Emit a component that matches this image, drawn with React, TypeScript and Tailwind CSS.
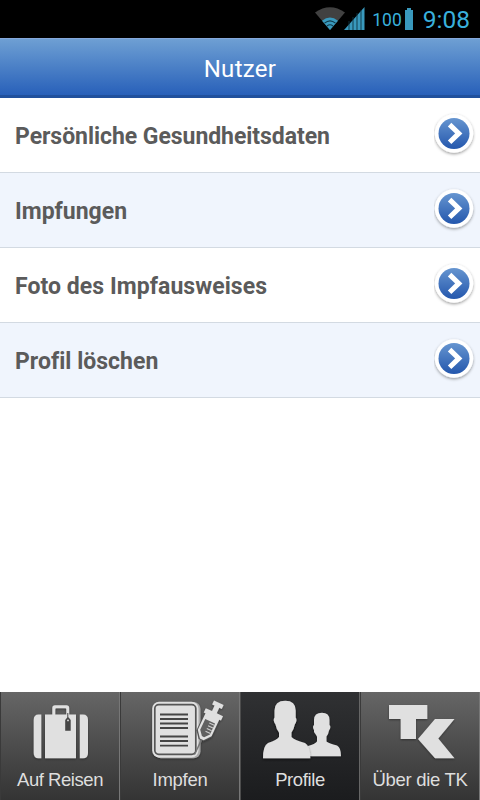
import type { ReactNode } from "react";

const rows = [
  { label: "Persönliche Gesundheitsdaten", tracking: "tracking-[-0.05px]" },
  { label: "Impfungen", tracking: "tracking-[0px]" },
  { label: "Foto des Impfausweises", tracking: "tracking-[0.06px]" },
  { label: "Profil löschen", tracking: "tracking-[0.02px]" },
];

function StatusBar() {
  return (
    <div className="flex h-[38px] items-center justify-end bg-black pr-[10px] text-[#39b0dc]">
      <svg width="50" height="24" viewBox="0 0 50 24">
        <path d="M0 5.5 Q15 -5 30 5.5 L15 23Z" fill="#414141" />
        <path d="M7 13.8 Q15 7 23 13.8 L15 23Z" fill="#3999bd" />
        <path d="M9.5 16.2 Q15 11.5 20.5 16.2 M12 19 Q15 16.5 18 19" stroke="#10394a" strokeWidth="1.1" fill="none" />
        <path d="M29 23 L49.5 0 V23Z" fill="#3999bd" />
        <path d="M34 14V23 M38 10V23 M42 6V23 M46 3V23" stroke="#0d3341" strokeWidth="0.9" />
      </svg>
      <span className="ml-[7px] mt-px font-[Roboto] text-[17.5px] leading-6">100</span>
      <svg className="ml-[3px]" width="8" height="24" viewBox="0 0 8 24">
        <path d="M2 1h4v2h2v20H0V3h2z" fill="#3999bd" />
      </svg>
      <span className="mt-[2px] ml-[10px] font-[Roboto] text-[24.5px] leading-6">9:08</span>
    </div>
  );
}

function ArrowButton() {
  return (
    <svg width="46" height="50" viewBox="0 0 46 50">
      <defs>
        <linearGradient id="arrow-blue" x1="0" y1="0" x2="0" y2="1">
          <stop offset="0" stopColor="#6695d0" />
          <stop offset="1" stopColor="#2457ad" />
        </linearGradient>
        <filter id="arrow-shadow" x="-20%" y="-20%" width="140%" height="150%">
          <feDropShadow dx="0" dy="1.3" stdDeviation="1.4" floodColor="#000" floodOpacity="0.4" />
        </filter>
      </defs>
      <circle cx="20" cy="23.5" r="19.2" fill="#fff" filter="url(#arrow-shadow)" />
      <circle cx="20" cy="23.5" r="15.5" fill="url(#arrow-blue)" />
      <path d="M15.6 14.6 L24.8 23.4 L15.6 32.2" fill="none" stroke="#fff" strokeWidth="5" />
    </svg>
  );
}

function SuitcaseIcon() {
  return (
    <>
      <path d="M41.3 22.5V66.3H38.5Q33.7 66.3 33.7 61V28Q33.7 22.5 38.5 22.5Z" />
      <path d="M79.8 22.5V66.3H83Q88 66.3 88 61V28Q88 22.5 83 22.5Z" />
      <path d="M45 22.5H52.3V16Q52.3 13.2 55 13.2H66.5Q69.2 13.2 69.2 16V22.5H76V66.3H45Z M55.3 22.5H66.3V17.2Q66.3 16.2 65.3 16.2H56.3Q55.3 16.2 55.3 17.2Z" fillRule="evenodd" />
      <path d="M67.8 21V27" stroke="#444" strokeWidth="1" />
      <path d="M65.2 28L67.2 25.5H68.7L70.7 28V38.7H65.2Z" fill="#444" />
      <circle cx="68" cy="28.4" r="0.9" />
    </>
  );
}

function VaccinationIcon() {
  return (
    <>
      <rect x="34" y="10" width="46.5" height="56.3" rx="7" fill="#aaa" />
      <rect x="32.2" y="9.7" width="46.3" height="55.8" rx="7" />
      <rect x="34.8" y="12.6" width="41" height="49.7" rx="4" fill="none" stroke="#555" strokeWidth="1.7" />
      <path d="M40 22.5H68M40 27H68M40 31.5H68M40 36H68M40 44.5H68M40 49H68M40 53.6H68" stroke="#444" strokeWidth="1.8" />
      <g transform="translate(98.2 12) rotate(25)">
        <path d="M-1 38H1L.5 56H-.5Z" fill="#777" />
        <path d="M-8.6 13H8V33L2.5 40H-3L-8.6 33Z" fill="#555" />
        <path d="M-5.3 -1.5H5.3V3H2.6V9H9.5V13.8H7.6V32L2 39H-2L-7.6 32V13.8H-9.5V9H-2.6V3H-5.3Z" />
        <path d="M-5.4 19H5.4V31L1.2 36H-1.2L-5.4 31Z" fill="#606060" />
        <path d="M0 21H5.4M0 24H5.4M0 27H5.4M0 30H5.4" stroke="#ccc" strokeWidth="1.1" />
      </g>
    </>
  );
}

function ProfilesIcon() {
  return (
    <>
      <path d="M74 40Q75.5 42 77 44.5V49.5Q75 52 68 54V64.3H101Q101 55.5 97 53.5Q89 51.5 86.5 49.5V44.5Q88.5 42 89 38.5Q91.5 34.5 89.5 33V28Q89.5 20.8 82 20.8Q74 20.8 74 28V33Q72 34.5 74 38Z" />
      <path
        d="M23 66.3Q23 53.5 28 51Q37 48 39 45V40.5Q36.3 37 35.5 32.5Q32.5 28 34.5 25.5V18.5Q34.5 8.7 45.3 8.7Q55.7 8.7 55.7 18.5V25.5Q57.7 28 54.8 32.5Q54 37 51.5 40.5V45Q54 48 65 51Q70.3 54 70.3 66.3Z"
        filter="url(#tab-shadow)"
      />
    </>
  );
}

function TkLogo() {
  return (
    <>
      <path d="M29 13H67.3V27H56V47H40.7V27H29Z" />
      <path d="M75 27H94.5L78.3 46.5L94.5 66.3H75L58 47Z" />
    </>
  );
}

type TabProps = {
  label: string;
  active?: boolean;
  labelClass: string;
  children: ReactNode;
};

function Tab({ label, active = false, labelClass, children }: TabProps) {
  return (
    <div
      className={
        active
          ? "flex h-full flex-col items-center border-x border-l-[#4c4c4c] border-r-[#666] bg-linear-to-b from-[#303133] to-[#1b1c1e]"
          : "flex h-full flex-col items-center border-r border-l border-l-[#3a3a3a] border-r-[#777] bg-linear-to-b from-[#666] to-[#343434]"
      }
    >
      <svg className="h-[76px] w-[120px] shrink-0" viewBox="0 0 120 76" fill="#e0e0e0">
        <defs>
          <filter id="tab-shadow" x="-10%" y="-10%" width="120%" height="125%">
            <feDropShadow dx="0" dy="1" stdDeviation="1" floodColor="#000" floodOpacity="0.4" />
          </filter>
        </defs>
        <g filter="url(#tab-shadow)">{children}</g>
      </svg>
      <span
        className={`font-['Liberation_Sans'] text-[18.5px] leading-6 whitespace-nowrap text-[#dedede] ${labelClass}`}
      >
        {label}
      </span>
    </div>
  );
}

export default function App() {
  return (
    <div className="flex h-[800px] w-[480px] flex-col overflow-hidden bg-white">
      <StatusBar />
      <header className="flex h-[60px] items-center justify-center border-t border-b-[3px] border-t-[#85a8da] border-b-[#20509c] bg-linear-to-b from-[#6e9fd3] to-[#2860b9]">
        <h1 className="mt-1 font-[Roboto] text-[24px] leading-7 tracking-[0.3px] text-white">Nutzer</h1>
      </header>
      <ul className="flex-1">
        {rows.map((row) => (
          <li
            key={row.label}
            className="flex h-[75px] items-center justify-between border-b border-[#d3dae2] pl-[15px] odd:bg-white even:bg-[#f0f5fd]"
          >
            <span
              className={`mt-[4px] font-[Roboto] text-[23px] leading-7 font-bold whitespace-nowrap text-[#5b5b5b] ${row.tracking}`}
            >
              {row.label}
            </span>
            <ArrowButton />
          </li>
        ))}
      </ul>
      <nav className="grid h-[108px] grid-cols-4">
        <Tab label="Auf Reisen" labelClass="tracking-[-0.45px]">
          <SuitcaseIcon />
        </Tab>
        <Tab label="Impfen" labelClass="tracking-[-0.3px]">
          <VaccinationIcon />
        </Tab>
        <Tab label="Profile" labelClass="tracking-[-0.4px]" active>
          <ProfilesIcon />
        </Tab>
        <Tab label="Über die TK" labelClass="tracking-[-0.3px]">
          <TkLogo />
        </Tab>
      </nav>
    </div>
  );
}
